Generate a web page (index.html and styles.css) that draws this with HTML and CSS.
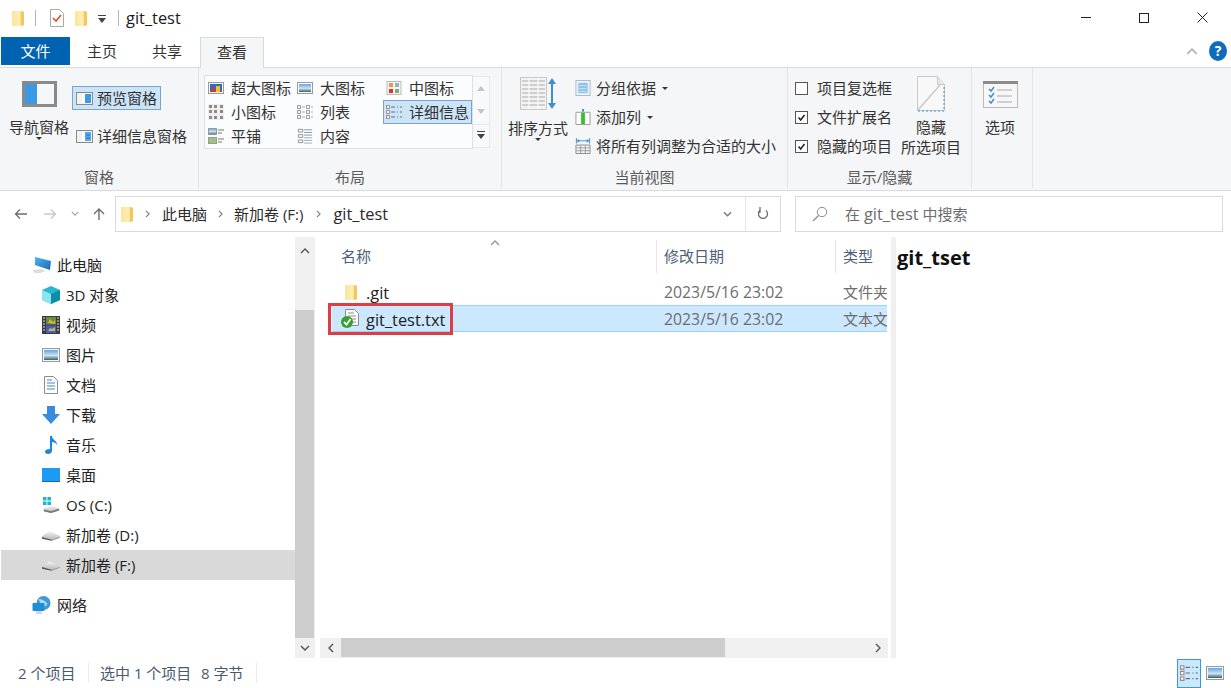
FILE: index.html
```html
<!DOCTYPE html>
<html lang="zh-CN">
<head>
<meta charset="utf-8">
<title>git_test</title>
<link rel="stylesheet" href="styles.css">
</head>
<body>
<svg class="defs" aria-hidden="true">
  <defs>
    <linearGradient id="fold" x1="0" x2="1" y1="0" y2="0"><stop offset="0" stop-color="#fbe59b"/><stop offset=".6" stop-color="#fdeeb4"/><stop offset="1" stop-color="#f3c95f"/></linearGradient>
    <linearGradient id="sky" x1="0" x2="0" y1="0" y2="1"><stop offset="0" stop-color="#5ea7e6"/><stop offset=".55" stop-color="#cfe2ef"/><stop offset="1" stop-color="#3d5f5f"/></linearGradient>
    <linearGradient id="disk" x1="0" x2="0" y1="0" y2="1"><stop offset="0" stop-color="#f2f2f2"/><stop offset="1" stop-color="#b4b4b4"/></linearGradient>
    <linearGradient id="screen" x1="0" x2="1" y1="0" y2="1"><stop offset="0" stop-color="#4fb4f2"/><stop offset="1" stop-color="#1769b8"/></linearGradient>
    <symbol id="folder" viewBox="0 0 12 16"><path d="M0 1h9l3 1v13l-3 1H0z" fill="url(#fold)"/><path d="M9 1l3 1v13l-3 1z" fill="#f2c85c"/></symbol>
    <symbol id="todo" viewBox="0 0 14 18"><path d="M.5.5h9l4 4v13H.5z" fill="#fff" stroke="#a9a9a9"/><path d="M3 9l3 3 5-6" fill="none" stroke="#d9532c" stroke-width="1.6"/></symbol>
    <symbol id="navpane" viewBox="0 0 35 26"><rect width="35" height="26" fill="#8a8a8a"/><rect x="3" y="3" width="12" height="20" fill="#3b99e6"/><rect x="15" y="3" width="17" height="20" fill="#f6f7f8"/></symbol>
    <symbol id="prevpane" viewBox="0 0 17 13"><rect x=".5" y=".5" width="16" height="12" fill="#f2f2f2" stroke="#8a8a8a"/><rect x="6" y="2" width="3" height="9" fill="#fff"/><rect x="9" y="2" width="6" height="9" fill="#3b99e6"/></symbol>
    <symbol id="detpane" viewBox="0 0 17 13"><rect x=".5" y=".5" width="16" height="12" fill="#f2f2f2" stroke="#8a8a8a"/><rect x="6" y="2" width="3" height="9" fill="#fff"/><rect x="9" y="2" width="6" height="9" fill="#5aa8ea"/><path d="M10 5h4M10 8h4" stroke="#1f6fc0"/></symbol>
    <symbol id="xl" viewBox="0 0 16 14"><rect x=".5" y="1.500" width="15" height="11" fill="#f6f6f6" stroke="#999"/><rect x="2" y="3" width="12" height="8" fill="#2e6cc0"/><path d="M2 11l3-5 2 3 3-4 4 6z" fill="#d9352a"/><rect x="8" y="5" width="4" height="6" fill="#e9c32a"/></symbol>
    <symbol id="lg" viewBox="0 0 16 14"><rect x=".5" y="1.500" width="15" height="11" fill="#fff" stroke="#999"/><rect x="2" y="3" width="12" height="8" fill="url(#sky)"/></symbol>
    <symbol id="md" viewBox="0 0 16 14"><rect x="1" y=".5" width="14" height="13" fill="#f4f4f4" stroke="#bbb"/><rect x="3" y="2" width="4" height="4" fill="#d9a04a"/><rect x="9" y="2" width="4" height="4" fill="#9cb0c4"/><rect x="3" y="8" width="4" height="4" fill="#d9352a"/><rect x="9" y="8" width="4" height="4" fill="#7fae6a"/></symbol>
    <symbol id="sm" viewBox="0 0 16 16"><path d="M0 0h16v16H0z" fill="#eee"/><path d="M1 1h3v3H1zM6 1h3v3H6zM12 1h3v3h-3zM1 6h3v3H1zM6 6h3v3H6zM12 6h3v3h-3zM1 12h3v3H1zM6 12h3v3H6zM12 12h3v3h-3z" fill="#8d8d8d"/><path d="M2 2h1v1H2zM13 7h1v1h-1zM7 13h1v1H7z" fill="#c8503c"/></symbol>
    <symbol id="list" viewBox="0 0 16 16"><path d="M.5 1.500h3v3h-3zM.5 6.500h3v3h-3zM.5 11.500h3v3h-3zM9.500 1.500h3v3h-3zM9.500 6.500h3v3h-3zM9.500 11.500h3v3h-3z" fill="#fff" stroke="#999"/><path d="M5 3h3M5 8h3M5 13h3M14 3h2M14 8h2M14 13h2" stroke="#aaa"/></symbol>
    <symbol id="detail" viewBox="0 0 16 16"><path d="M.5 1.500h3v3h-3zM.5 6.500h3v3h-3zM.5 11.500h3v3h-3z" fill="#fff" stroke="#9a8a80"/><path d="M5 3h4M11 3h1M14 3h2M5 8h4M11 8h1M14 8h2M5 13h4M11 13h1M14 13h2" stroke="#5b7488"/></symbol>
    <symbol id="tile" viewBox="0 0 16 16"><rect x=".5" y=".5" width="8" height="6" fill="url(#sky)" stroke="#999"/><rect x=".5" y="9.500" width="8" height="6" fill="#9fc27f" stroke="#999"/><path d="M10 2h6M10 5h4M10 11h6M10 14h4" stroke="#777"/></symbol>
    <symbol id="content" viewBox="0 0 16 18"><path d="M.5 1.500h5v3h-5zM.5 7.500h5v3h-5zM.5 13.500h5v3h-5z" fill="#fff" stroke="#8a8a8a"/><path d="M7 2h9M7 5h9M7 8h9" stroke="#7a93ad"/><path d="M7 11h9M7 14h9M7 17h9" stroke="#9aa8b6"/></symbol>
    <symbol id="sort" viewBox="0 0 36 33"><rect x=".5" y=".5" width="26" height="32" fill="#f2f2f2" stroke="#c8c8c8"/><path d="M2 4h23M2 8h23M2 12h23M2 16h23M2 20h23M2 24h23M2 28h23" stroke="#cfcfcf" stroke-width="2"/><path d="M9 1v31M18 1v31" stroke="#fff"/><path d="M32 3v27" stroke="#3f8ed2" stroke-width="2"/><path d="M28 7l4-6 4 6zM28 26l4 6 4-6z" fill="#3f8ed2"/></symbol>
    <symbol id="group" viewBox="0 0 16 17"><rect x=".5" y=".5" width="15" height="16" fill="#eef4fa" stroke="#a8b8c8"/><rect x="3" y="3" width="10" height="11" fill="#8cc4ee"/><path d="M4 6h8M4 9h8M4 12h8" stroke="#c7e2f6"/></symbol>
    <symbol id="addcol" viewBox="0 0 16 17"><path d="M.5 3.500h15v13H.5z" fill="#fff" stroke="#999"/><rect x="6" y="4" width="4" height="12" fill="#33c02e"/><path d="M8 0v3" stroke="#3f8ed2" stroke-width="2"/></symbol>
    <symbol id="fitcol" viewBox="0 0 16 17"><path d="M.5 7.500h15v9H.5z" fill="#f4f4f4" stroke="#888"/><path d="M1 10.500h14M1 13.500h14M5.500 8v8M10.500 8v8" stroke="#999"/><path d="M1 3h14" stroke="#3f8ed2"/><path d="M1 0v6M15 0v6" stroke="#3f8ed2"/><path d="M4 1L1.500 3 4 5zM12 1l2.500 2L12 5z" fill="#3f8ed2"/></symbol>
    <symbol id="hide" viewBox="0 0 28 36"><path d="M.5.500h20l7 8v26H.500z" fill="#f8f8f8" stroke="#c9c9c9"/><path d="M20.500.500v8h7" fill="#e8e8e8" stroke="#c9c9c9"/><path d="M1 34L23 9" stroke="#c9c9c9" stroke-width="1.500"/><path d="M1 35h26V9" fill="none" stroke="#3f8ed2" stroke-dasharray="2 2"/></symbol>
    <symbol id="options" viewBox="0 0 35 27"><rect x=".5" y=".5" width="34" height="26" fill="#f7f7f7" stroke="#bbb"/><rect width="35" height="3" fill="#8c8c8c"/><path d="M6 8l2 2 3-4M6 14l2 2 3-4M6 20l2 2 3-4" fill="none" stroke="#3f8ed2" stroke-width="1.500"/><path d="M14 9h15M14 15h15M14 21h15" stroke="#aaa"/></symbol>
    <symbol id="pc" viewBox="0 0 20 18"><path d="M3 1l16 4-1 9L3 9z" fill="url(#screen)"/><path d="M1 14l8-1 5 2-6 2H2z" fill="#dcdcdc"/></symbol>
    <symbol id="cube" viewBox="0 0 18 18"><path d="M9 0l9 4v10l-9 4-9-4V4z" fill="#29b6cf"/><path d="M0 4l9 4v10l-9-4z" fill="#8ce4ee"/><path d="M9 8l9-4v10l-9 4z" fill="#0e8ea6"/></symbol>
    <symbol id="film" viewBox="0 0 18 18"><rect width="18" height="18" fill="#3b3b3b"/><rect x="4" y="1" width="10" height="7.500" fill="#6a8d3a"/><rect x="4" y="9.500" width="10" height="7.500" fill="#3a62c8"/><path d="M1 2h2M1 5h2M1 8h2M1 11h2M1 14h2M15 2h2M15 5h2M15 8h2M15 11h2M15 14h2" stroke="#ddd"/><path d="M6 7l2-4 3 3 2-2v4zM6 15l2-3 2 1 3-2v4z" fill="#d8b23a"/></symbol>
    <symbol id="pic" viewBox="0 0 18 14"><rect x=".5" y=".5" width="17" height="13" fill="#f5f5f5" stroke="#8f9ba6"/><rect x="2" y="2" width="14" height="10" fill="url(#sky)"/></symbol>
    <symbol id="docs" viewBox="0 0 14 18"><path d="M.5.500h9l4 4v13H.500z" fill="#fff" stroke="#8c8c8c"/><path d="M3 4h5M3 7h8M3 10h8M3 13h8" stroke="#3f86c8"/></symbol>
    <symbol id="dl" viewBox="0 0 18 18"><path d="M5 0h8v8h5l-9 10L0 8h5z" fill="#3a8be0"/></symbol>
    <symbol id="music" viewBox="0 0 14 18"><path d="M6 0h2c0 4 5 4 5 9-1-2-3-3-5-3v9c0 2-2 3-4 3s-3-1-3-2.500S3 13 6 13z" fill="#1a88e0"/></symbol>
    <symbol id="desk" viewBox="0 0 18 14"><rect width="18" height="13" fill="#1b9cf2"/><path d="M0 13h18v1H0z" fill="#0f6cb0"/></symbol>
    <symbol id="osd" viewBox="0 0 20 18"><path d="M1 0h4v4H1zM6 0h4v4H6zM1 5h4v4H1zM6 5h4v4H6z" fill="#1fb6d6"/><path d="M2 13l9-3 8 3v2l-9 3-8-2z" fill="url(#disk)"/><path d="M2 14l8 2 9-3v2l-9 3-8-2z" fill="#777"/></symbol>
    <symbol id="hdd" viewBox="0 0 19 12"><path d="M0 7l8-5 11 5v2l-9 3-10-3z" fill="url(#disk)"/><path d="M0 8l10 3v1L0 10z" fill="#555"/><path d="M10 11l9-3v1l-9 3z" fill="#999"/></symbol>
    <symbol id="net" viewBox="0 0 19 18"><circle cx="11" cy="7" r="7" fill="#3d9ad6"/><path d="M6 3c3 0 6 1 9 5-2 3-4 3-6 2z" fill="#a8dcee"/><rect y="7" width="12" height="8" rx="1" fill="#1d8fd8"/><path d="M4 15h5l1 3H3z" fill="#cfd8de"/></symbol>
    <symbol id="txt" viewBox="0 0 18 19"><path d="M4.500.500h9l4 4v12h-13z" fill="#fff" stroke="#8c8c8c"/><path d="M7 4h6M7 7h8M7 10h8M7 13h8" stroke="#888"/><circle cx="6" cy="13" r="6" fill="#35a02f"/><path d="M3 13l2.500 2.500L9.500 10" fill="none" stroke="#fff" stroke-width="1.800"/></symbol>
    <symbol id="search" viewBox="0 0 16 16"><circle cx="10" cy="6" r="4.700" fill="none" stroke="#8a8a8a"/><path d="M6.500 9.500L1 15" stroke="#8a8a8a" stroke-width="1.200"/></symbol>
    <symbol id="refresh" viewBox="0 0 12 14"><path d="M3 3.500a4.500 4.500 0 1 0 6 0" fill="none" stroke="#6d6d6d" stroke-width="1.300"/><path d="M3 0v5h-2" fill="none" stroke="#6d6d6d" stroke-width="1.300"/></symbol>
    <symbol id="up" viewBox="0 0 10 6"><path d="M1 5l4-4 4 4" fill="none" stroke="#555" stroke-width="1.400"/></symbol>
    <symbol id="dn" viewBox="0 0 10 6"><path d="M1 1l4 4 4-4" fill="none" stroke="#555" stroke-width="1.400"/></symbol>
    <symbol id="lf" viewBox="0 0 6 10"><path d="M5 1L1 5l4 4" fill="none" stroke="#555" stroke-width="1.400"/></symbol>
    <symbol id="rt" viewBox="0 0 6 10"><path d="M1 1l4 4-4 4" fill="none" stroke="#555" stroke-width="1.400"/></symbol>
    <symbol id="tri-up" viewBox="0 0 8 5"><path d="M0 5l4-5 4 5z" fill="#c4c4c4"/></symbol>
    <symbol id="tri-dn" viewBox="0 0 8 5"><path d="M0 0h8L4 5z" fill="#c4c4c4"/></symbol>
    <symbol id="more" viewBox="0 0 8 8"><path d="M0 0h8v1H0z" fill="#444"/><path d="M0 3h8L4 8z" fill="#444"/></symbol>
  </defs>
</svg>

<div class="window">
  <header class="titlebar">
    <svg class="i-folder"><use href="#folder"/></svg>
    <span class="tb-sep sep-a"></span>
    <svg class="i-todo"><use href="#todo"/></svg>
    <svg class="i-folder2"><use href="#folder"/></svg>
    <svg class="qa-caret"><use href="#more"/></svg>
    <span class="tb-sep sep-b"></span>
    <span class="title">git_test</span>
    <div class="winctl">
      <span class="ctl"><span class="min"></span></span>
      <span class="ctl"><span class="max"></span></span>
      <span class="ctl"><svg class="close" viewBox="0 0 11 11"><path d="M.5.5l10 10M10.500.5l-10 10" stroke="#222"/></svg></span>
    </div>
  </header>

  <nav class="tabs">
    <span class="tab file">文件</span>
    <span class="tab t-home">主页</span>
    <span class="tab t-share">共享</span>
    <span class="tab active">查看</span>
    <span class="tabs-right">
      <svg class="collapse"><use href="#up"/></svg>
      <span class="help">?</span>
    </span>
  </nav>

  <section class="ribbon">
    <div class="group g-pane">
      <div class="gbody">
        <div class="big b-nav">
          <svg class="i-navpane"><use href="#navpane"/></svg>
          <span class="big-label">导航窗格</span>
          <span class="caret"></span>
        </div>
        <div class="panes">
          <div class="small on"><svg class="i16x12"><use href="#prevpane"/></svg>预览窗格</div>
          <div class="small"><svg class="i16x12"><use href="#detpane"/></svg>详细信息窗格</div>
        </div>
      </div>
      <div class="glabel">窗格</div>
    </div>

    <div class="group g-layout">
      <div class="gbody">
        <div class="gallery">
          <div class="gal-item"><svg class="i16"><use href="#xl"/></svg>超大图标</div>
          <div class="gal-item"><svg class="i16"><use href="#lg"/></svg>大图标</div>
          <div class="gal-item"><svg class="i16"><use href="#md"/></svg>中图标</div>
          <div class="gal-item"><svg class="i16"><use href="#sm"/></svg>小图标</div>
          <div class="gal-item"><svg class="i16"><use href="#list"/></svg>列表</div>
          <div class="gal-item on"><svg class="i16"><use href="#detail"/></svg>详细信息</div>
          <div class="gal-item"><svg class="i16"><use href="#tile"/></svg>平铺</div>
          <div class="gal-item"><svg class="i16"><use href="#content"/></svg>内容</div>
        </div>
        <div class="gal-scroll">
          <span><svg class="gs-arrow"><use href="#tri-up"/></svg></span>
          <span><svg class="gs-arrow"><use href="#tri-dn"/></svg></span>
          <span class="gs-more"><svg class="gs-arrow tall"><use href="#more"/></svg></span>
        </div>
      </div>
      <div class="glabel">布局</div>
    </div>

    <div class="group g-view">
      <div class="gbody">
        <div class="big b-sort">
          <svg class="i-sort"><use href="#sort"/></svg>
          <span class="big-label">排序方式</span>
          <span class="caret"></span>
        </div>
        <div class="vlist">
          <div class="vrow"><svg class="i16"><use href="#group"/></svg>分组依据<span class="caret inline"></span></div>
          <div class="vrow"><svg class="i16"><use href="#addcol"/></svg>添加列<span class="caret inline"></span></div>
          <div class="vrow"><svg class="i16"><use href="#fitcol"/></svg>将所有列调整为合适的大小</div>
        </div>
      </div>
      <div class="glabel">当前视图</div>
    </div>

    <div class="group g-show">
      <div class="gbody">
        <div class="vlist checks">
          <div class="vrow"><span class="check"></span>项目复选框</div>
          <div class="vrow"><span class="check"><svg viewBox="0 0 13 13"><path d="M3 6.500l2.500 3L10 3.500" fill="none" stroke="#222" stroke-width="1.800"/></svg></span>文件扩展名</div>
          <div class="vrow"><span class="check"><svg viewBox="0 0 13 13"><path d="M3 6.500l2.500 3L10 3.500" fill="none" stroke="#222" stroke-width="1.800"/></svg></span>隐藏的项目</div>
        </div>
        <div class="big b-hide">
          <svg class="i-hide"><use href="#hide"/></svg>
          <span class="big-label">隐藏</span>
          <span class="big-label">所选项目</span>
        </div>
      </div>
      <div class="glabel">显示/隐藏</div>
    </div>

    <div class="group g-opt">
      <div class="gbody">
        <div class="big b-opt">
          <svg class="i-options"><use href="#options"/></svg>
          <span class="big-label">选项</span>
        </div>
      </div>
      <div class="glabel"></div>
    </div>
  </section>

  <section class="addrbar">
    <svg class="nb" viewBox="0 0 14 12"><path d="M13 6H2M6 1.500L1.500 6 6 10.500" fill="none" stroke="#6d6d6d" stroke-width="1.300"/></svg>
    <svg class="nb" viewBox="0 0 14 12"><path d="M1 6h11M8 1.500L12.500 6 8 10.500" fill="none" stroke="#c8c8c8" stroke-width="1.300"/></svg>
    <svg class="nb-small"><use href="#dn"/></svg>
    <svg class="nb nb-up" viewBox="0 0 14 14"><path d="M7 13V2M2 7l5-5 5 5" fill="none" stroke="#6d6d6d" stroke-width="1.400"/></svg>
    <div class="addr">
      <svg class="i-addrfold"><use href="#folder"/></svg>
      <span class="crumb-sep c1"><svg class="chev"><use href="#rt"/></svg></span>
      <span>此电脑</span>
      <span class="crumb-sep c2"><svg class="chev"><use href="#rt"/></svg></span>
      <span>新加卷 (F:)</span>
      <span class="crumb-sep c3"><svg class="chev"><use href="#rt"/></svg></span>
      <span class="lat">git_test</span>
      <svg class="addr-dd"><use href="#dn"/></svg>
      <span class="addr-refresh"><svg class="i-refresh"><use href="#refresh"/></svg></span>
    </div>
    <div class="searchbox">
      <svg class="i-search"><use href="#search"/></svg>
      <span>在 <span class="lat">git_test</span> 中搜索</span>
    </div>
  </section>

  <main class="main">
    <aside class="tree">
      <ul class="tree-list">
        <li class="root"><svg class="i-r"><use href="#pc"/></svg>此电脑</li>
        <li><svg class="i-t"><use href="#cube"/></svg>3D 对象</li>
        <li><svg class="i-t"><use href="#film"/></svg>视频</li>
        <li><svg class="i-t"><use href="#pic"/></svg>图片</li>
        <li><svg class="i-t"><use href="#docs"/></svg>文档</li>
        <li><svg class="i-t"><use href="#dl"/></svg>下载</li>
        <li><svg class="i-t"><use href="#music"/></svg>音乐</li>
        <li><svg class="i-t"><use href="#desk"/></svg>桌面</li>
        <li><svg class="i-t"><use href="#osd"/></svg>OS (C:)</li>
        <li><svg class="i-t"><use href="#hdd"/></svg>新加卷 (D:)</li>
        <li class="cur"><svg class="i-t"><use href="#hdd"/></svg>新加卷 (F:)</li>
        <li class="root net"><svg class="i-r"><use href="#net"/></svg>网络</li>
      </ul>
    </aside>
    <div class="vscroll">
      <div class="vs-top"><svg class="arr"><use href="#up"/></svg></div>
      <div class="vs-thumb"></div>
      <div class="vs-bot"><svg class="arr"><use href="#dn"/></svg></div>
    </div>

    <div class="files">
      <div class="fhead">
        <div class="fh name">名称<svg class="sortmark"><use href="#up"/></svg></div>
        <div class="fh">修改日期</div>
        <div class="fh">类型</div>
      </div>
      <div class="frows">
        <div class="frow">
          <div class="fname"><svg class="i-f"><use href="#folder"/></svg><span class="lat">.git</span></div>
          <div class="fdim date">2023/5/16 23:02</div>
          <div class="fdim ftype">文件夹</div>
        </div>
        <div class="frow sel">
          <div class="fname"><svg class="i-txt"><use href="#txt"/></svg><span class="lat">git_test.txt</span></div>
          <div class="fdim date">2023/5/16 23:02</div>
          <div class="fdim ftype">文本文档</div>
          <span class="redbox"></span>
        </div>
      </div>
      <div class="hscroll">
        <div class="hs-btn"><svg class="arr-h"><use href="#lf"/></svg></div>
        <div class="hs-thumb"></div>
        <div class="hs-rest"></div>
        <div class="hs-btn"><svg class="arr-h"><use href="#rt"/></svg></div>
      </div>
    </div>

    <div class="splitter"></div>
    <div class="preview">git_tset</div>
  </main>

  <footer class="status">
    <span class="st st1">2 个项目</span>
    <span class="st st2">选中 1 个项目</span>
    <span class="st st3">8 字节</span>
    <div class="viewbtns">
      <span class="vb on"><svg class="i-vb"><use href="#detail"/></svg></span>
      <span class="vb"><svg class="i-vb2"><use href="#pic"/></svg></span>
    </div>
  </footer>
</div>
</body>
</html>
```

FILE: styles.css
```css
* { box-sizing: border-box; }
html, body { margin: 0; padding: 0; }
body {
  width: 1231px;
  height: 688px;
  overflow: hidden;
  background: #fff;
  color: #2b2b2b;
  font: 15px/20px "Open Sans", "Noto Sans CJK SC", sans-serif;
}
svg { display: block; flex: none; }
.defs { position: absolute; width: 0; height: 0; }
.window { display: flex; flex-direction: column; height: 688px; }
.lat { font-size: 16.4px; }

/* title bar */
.titlebar { height: 37px; display: flex; align-items: center; flex: none; padding-bottom: 2px; }
.i-folder { width: 12px; height: 16px; margin-left: 12px; }
.tb-sep { width: 1px; height: 16px; background: #b5b5b5; }
.sep-a { margin-left: 11px; }
.i-todo { width: 14px; height: 18px; margin-left: 14px; }
.i-folder2 { width: 12px; height: 16px; margin-left: 11px; }
.qa-caret { width: 8px; height: 8px; margin-left: 11px; margin-top: 3px; }
.sep-b { margin-left: 12px; }
.title { margin-left: 7px; color: #1c1c1c; font-size: 16.4px; }
.winctl { margin-left: auto; display: flex; }
.ctl { width: 58px; height: 30px; display: flex; align-items: center; justify-content: center; }
.min { width: 10px; height: 1px; background: #222; }
.max { width: 10px; height: 10px; border: 1px solid #222; }
.close { width: 11px; height: 11px; }

/* tabs */
.tabs { height: 31px; display: flex; align-items: flex-start; padding-left: 1px; flex: none; position: relative; z-index: 1; }
.tab { height: 28px; line-height: 28px; text-align: center; color: #333; }
.file { width: 69px; background: #0063b1; color: #fff; }
.t-home { width: 64px; }
.t-share { width: 66px; }
.active { width: 64px; height: 31px; background: #f5f6f7; border: 1px solid #dadbdc; border-bottom: 0; line-height: 29px; }
.tabs-right { margin-left: auto; display: flex; align-items: center; height: 28px; }
.collapse { width: 12px; height: 7px; opacity: .45; margin-right: 11px; }
.help { width: 18px; height: 20px; margin-right: 4px; border-radius: 50%; background: #0f6cbd; color: #fff; font: bold 14px/20px "Open Sans", sans-serif; text-align: center; }

/* ribbon */
.ribbon { height: 124px; flex: none; display: flex; background: #f5f6f7; border-top: 1px solid #dadbdc; border-bottom: 1px solid #dadbdc; margin-top: -1px; color: #333; }
.group { display: flex; flex-direction: column; border-right: 1px solid #e3e4e5; margin-bottom: 2px; }
.gbody { flex: 1; display: flex; min-height: 0; }
.glabel { height: 23px; padding-top: 2px; text-align: center; color: #5a5a5a; line-height: 20px; flex: none; white-space: nowrap; }
.g-pane { width: 199px; }
.g-layout { width: 303px; }
.g-view { width: 286px; }
.g-show { width: 184px; }
.g-opt { width: 61px; }
.g-pane .gbody { padding-left: 8px; }
.big { display: flex; flex-direction: column; align-items: center; width: 60px; flex: none; position: relative; }
.big-label { white-space: nowrap; line-height: 20px; }
.caret { width: 0; height: 0; border: 3px solid transparent; border-top: 3px solid #333; border-bottom: 0; }
.caret.inline { margin-left: 1px; }
.i-navpane { width: 35px; height: 26px; margin-top: 13px; margin-bottom: 10px; }
.b-nav { width: 62px; }
.panes { margin-left: 2px; padding-top: 18px; display: flex; flex-direction: column; gap: 14px; }
.small { height: 24px; display: flex; align-items: center; gap: 4px; padding: 0 2px 0 3px; white-space: nowrap; border: 1px solid transparent; }
.small.on { background: #cce4f7; border-color: #7da2ce; width: 89px; }
.i16x12 { width: 17px; height: 13px; }
.i16 { width: 16px; height: 16px; }

.g-layout .gbody { padding: 7px 0 0 5px; }
.gallery { width: 269px; height: 74px; background: #fbfcfd; border: 1px solid #e0e0e0; display: grid; grid-template-columns: 89px 89px 89px; grid-auto-rows: 24px; }
.gal-item { display: flex; align-items: center; gap: 7px; padding-left: 2px; white-space: nowrap; border: 1px solid transparent; }
.gal-item.on { background: #cce4f7; border-color: #7da2ce; }
.gal-scroll { width: 17px; height: 72px; margin-top: 1px; display: flex; flex-direction: column; background: #f8f9fa; border: 1px solid #e8e8e8; border-left: 0; }
.gal-scroll span { flex: 1; display: flex; align-items: center; justify-content: center; }
.gs-arrow { width: 8px; height: 5px; }
.gs-arrow.tall { height: 8px; }
.gs-more { box-shadow: inset 0 1px 0 #e8e8e8; }

.g-view .gbody { padding-left: 6px; }
.i-sort { width: 36px; height: 33px; margin-top: 9px; margin-bottom: 8px; }
.vlist { display: flex; flex-direction: column; gap: 5px; padding-top: 8px; margin-left: 7px; }
.vrow { height: 24px; display: flex; align-items: center; gap: 5px; white-space: nowrap; }

.g-show .gbody { padding-left: 7px; }
.checks { width: 106px; margin-left: 0; }
.checks .vrow { gap: 9px; }
.check { width: 13px; height: 13px; background: #fff; border: 1px solid #555; flex: none; }
.check svg { width: 11px; height: 11px; }
.i-hide { width: 28px; height: 36px; margin-top: 8px; margin-bottom: 5px; }

.b-opt { margin-left: -4px; }
.g-opt .gbody { justify-content: center; }
.i-options { width: 35px; height: 27px; margin-top: 13px; margin-bottom: 9px; }

/* address bar */
.addrbar { height: 47px; display: flex; align-items: center; flex: none; padding: 0 8px 0 14px; margin-top: -1px; }
.nb { width: 14px; height: 14px; margin-right: 15px; }
.nb-small { width: 8px; height: 5px; margin-right: 13px; margin-left: -1px; opacity: .55; }
.nb-up { margin-right: 9px; }
.addr { width: 666px; height: 36px; flex: none; border: 1px solid #d9d9d9; display: flex; align-items: center; padding-left: 5px; white-space: nowrap; margin-right: 14px; }
.i-addrfold { width: 12px; height: 18px; }
.crumb-sep { display: flex; justify-content: center; }
.c1 { width: 29px; }
.c2 { width: 27px; }
.c3 { width: 30px; }
.chev { width: 5px; height: 8px; opacity: .75; }
.addr-dd { width: 9px; height: 6px; margin-left: auto; opacity: .8; }
.addr-refresh { width: 35px; height: 34px; margin-left: 13px; border-left: 1px solid #e5e5e5; display: flex; align-items: center; justify-content: center; }
.i-refresh { width: 12px; height: 14px; }
.searchbox { width: 428px; height: 36px; flex: none; border: 1px solid #d9d9d9; display: flex; align-items: center; color: #6d6d6d; padding-left: 16px; }
.i-search { width: 16px; height: 16px; margin-right: 17px; }

/* main */
.main { flex: 1; display: flex; min-height: 0; }
.tree { width: 294px; margin-left: 1px; flex: none; }
.tree-list { list-style: none; margin: 0; padding: 13px 0 0; }
.tree-list li { height: 30px; display: flex; align-items: center; padding-left: 41px; gap: 6px; color: #222; white-space: nowrap; }
.tree-list li.root { padding-left: 31px; gap: 5px; }
.tree-list li.net { margin-top: 10px; }
.tree-list li.cur { background: #d9d9d9; }
.i-t { width: 18px; height: 18px; }
.i-r { width: 20px; height: 18px; }

.vscroll { width: 20px; flex: none; display: flex; flex-direction: column; background: #f0f0f0; }
.vs-top { height: 73px; display: flex; justify-content: center; padding-top: 11px; }
.vs-thumb { flex: 1; background: #cdcdcd; margin-right: 1px; }
.vs-bot { height: 20px; display: flex; justify-content: center; align-items: center; }
.arr { width: 10px; height: 6px; }

.files { width: 572px; margin-left: 1px; flex: none; display: flex; flex-direction: column; }
.fhead { height: 40px; margin-left: 16px; display: grid; grid-template-columns: 324px 179px 1fr; padding-top: 3px; }
.fh { border-left: 1px solid #e5e5e5; padding-left: 7px; color: #4c607a; line-height: 33px; position: relative; height: 33px; }
.fh.name { border-left: 0; padding-left: 9px; }
.sortmark { position: absolute; left: 158px; top: 0; width: 10px; height: 6px; opacity: .6; }
.frows { flex: 1; padding-top: 2px; min-height: 0; }
.frow { height: 26px; margin: 0 1px 0 16px; display: grid; grid-template-columns: 332px 179px 1fr; align-items: center; position: relative; }
.frow.sel { height: 27px; background: #cce8ff; border-top: 1px solid #99d1ff; border-bottom: 1px solid #99d1ff; }
.frow > div { white-space: nowrap; }
.ftype { overflow: hidden; }
.fname { display: flex; align-items: center; padding-left: 13px; color: #222; }
.fname .lat { line-height: 24px; position: relative; top: 1px; }
.i-f { width: 12px; height: 16px; margin-right: 9px; }
.i-txt { width: 18px; height: 19px; margin-left: -4px; margin-right: 7px; }
.fdim { color: #6d6d6d; }
.date { font-size: 15.8px; }
.redbox { position: absolute; left: -4px; top: -3px; width: 125px; height: 32px; border: 3px solid #e03c44; }
.hscroll { height: 20px; margin-left: 4px; display: flex; background: #f0f0f0; flex: none; }
.hs-btn { width: 21px; display: flex; align-items: center; justify-content: center; }
.arr-h { width: 6px; height: 10px; }
.hs-thumb { width: 384px; background: #cdcdcd; margin-bottom: 1px; }
.hs-rest { flex: 1; }
.splitter { width: 5px; margin-left: 3px; background: #f0f0f0; flex: none; }
.preview { margin-left: 1px; padding-top: 6px; font-size: 20px; line-height: 30px; font-weight: 700; color: #111; }

/* status */
.status { height: 30px; flex: none; display: flex; align-items: center; color: #4a5a6e; position: relative; }
.st { white-space: nowrap; }
.st1 { margin-left: 18px; width: 71px; border-right: 1px solid #ececec; }
.st2 { margin-left: 11px; width: 101px; }
.st3 { width: 56px; border-right: 1px solid #ececec; }
.viewbtns { margin-left: auto; display: flex; align-items: center; gap: 5px; padding-right: 7px; }
.vb { display: flex; align-items: center; justify-content: center; }
.vb.on { width: 24px; height: 29px; background: #cce8ff; border: 1px solid #3a9ad0; }
.i-vb { width: 18px; height: 18px; }
.i-vb2 { width: 18px; height: 14px; }
```
